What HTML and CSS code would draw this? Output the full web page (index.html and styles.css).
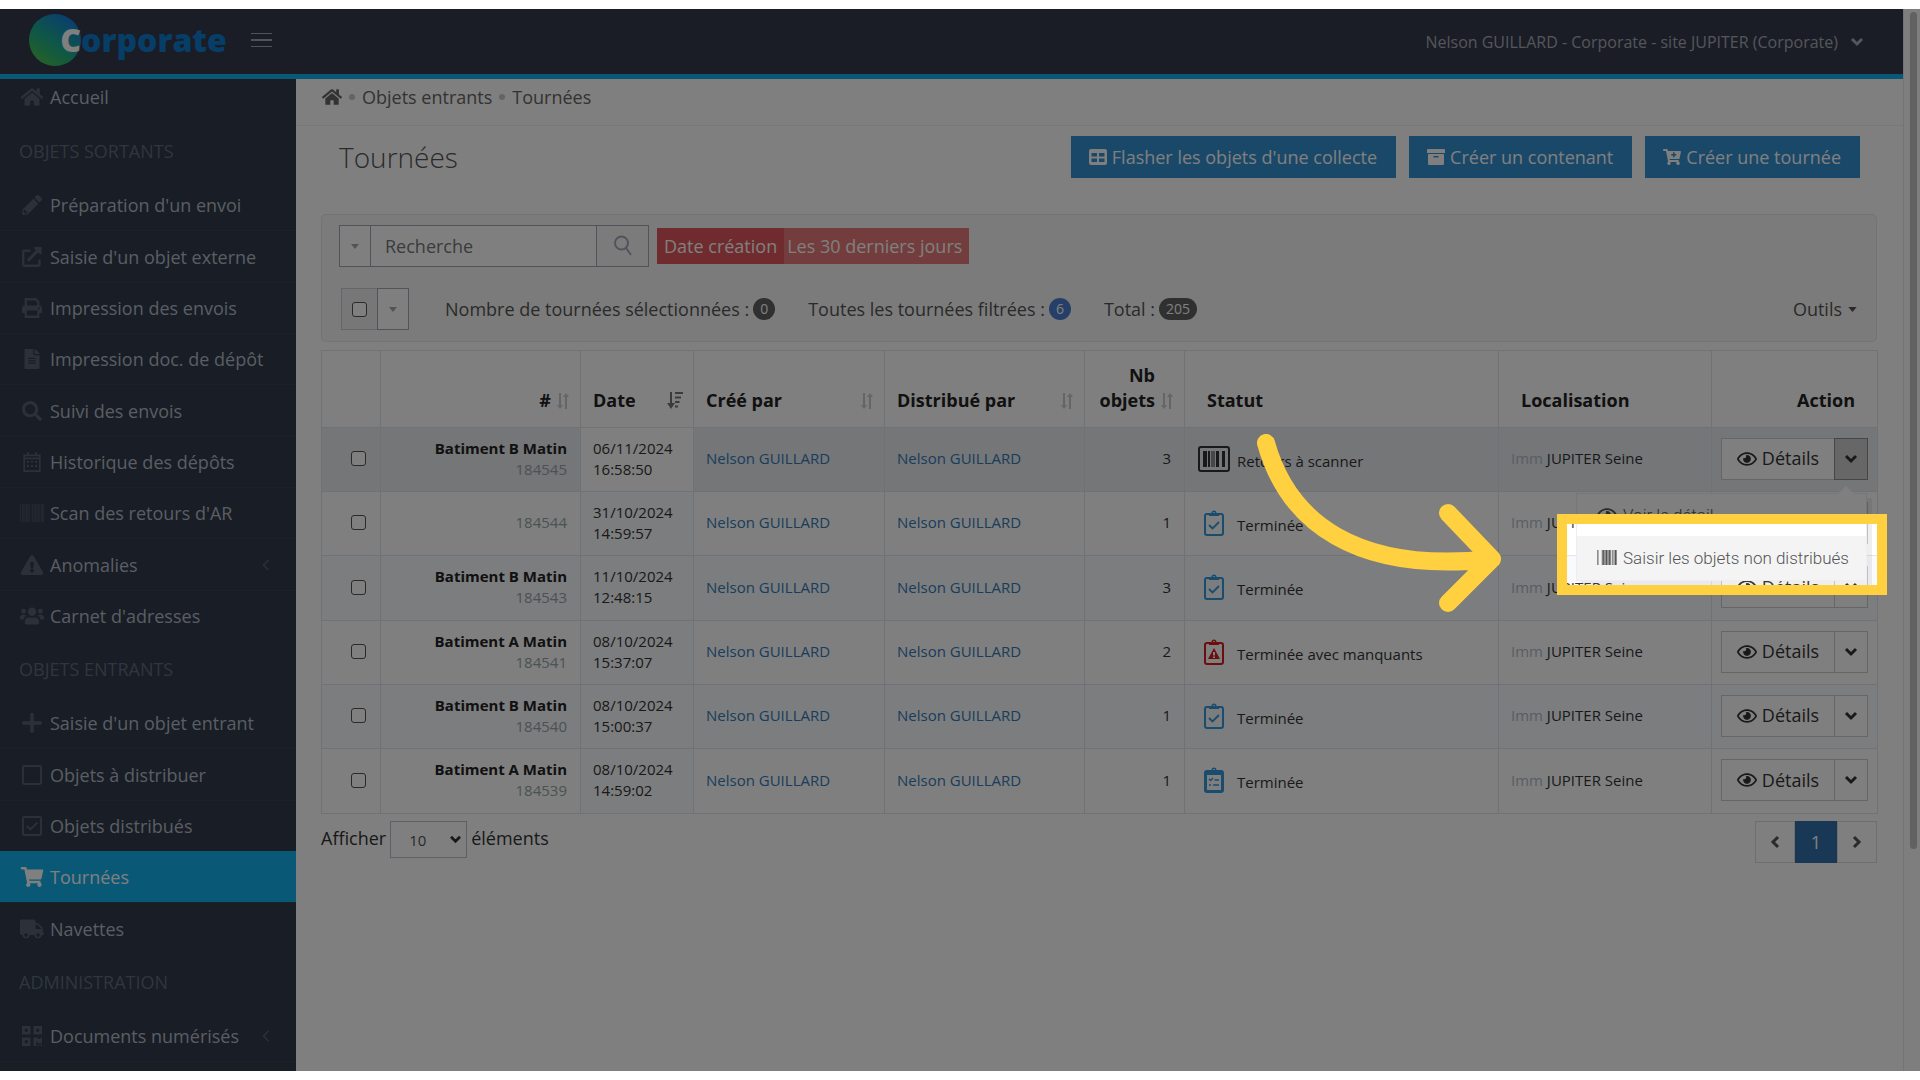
FILE: index.html
```html
<!DOCTYPE html>
<html lang="fr">
<head>
<meta charset="utf-8">
<title>Tournées</title>
<meta name="viewport" content="width=device-width, initial-scale=1">
<link rel="stylesheet" href="styles.css">
</head>
<body>
<svg class="sprite" aria-hidden="true">
  <symbol id="home" viewBox="0 0 576 512"><path d="M280.37 148.26L96 300.11V464a16 16 0 0 0 16 16l112.06-.29a16 16 0 0 0 15.92-16V368a16 16 0 0 1 16-16h64a16 16 0 0 1 16 16v95.64a16 16 0 0 0 16 16.05L464 480a16 16 0 0 0 16-16V300L295.67 148.26a12.19 12.19 0 0 0-15.3 0zM571.6 251.47L488 182.56V44.05a12 12 0 0 0-12-12h-56a12 12 0 0 0-12 12v72.61L318.47 43a48 48 0 0 0-61 0L4.34 251.47a12 12 0 0 0-1.6 16.9l25.5 31A12 12 0 0 0 45.15 301l235.22-193.74a12.19 12.19 0 0 1 15.3 0L530.9 301a12 12 0 0 0 16.9-1.6l25.5-31a12 12 0 0 0-1.7-16.93z"/></symbol>
  <symbol id="pencil" viewBox="0 0 512 512"><path d="M497.9 142.1l-46.1 46.1c-4.7 4.7-12.3 4.7-17 0l-111-111c-4.7-4.7-4.7-12.3 0-17l46.1-46.1c18.7-18.7 49.1-18.7 67.9 0l60.1 60.1c18.8 18.7 18.8 49.1 0 67.9zM284.2 99.8L21.6 362.4.4 483.9c-2.9 16.4 11.4 30.6 27.8 27.8l121.5-21.3 262.6-262.6c4.7-4.7 4.7-12.3 0-17l-111-111c-4.8-4.7-12.4-4.7-17.1 0zM88 424h48v36.3l-64.5 11.3-31.1-31.1L51.7 376H88v48z"/></symbol>
  <symbol id="external" viewBox="0 0 512 512"><path d="M448 320v136a24 24 0 0 1-24 24H56a24 24 0 0 1-24-24V120a24 24 0 0 1 24-24h160" fill="none" stroke="currentColor" stroke-width="60"/><path d="M488 0H330c-22 0-32 26-17 41l45 45-222 222c-9 9-9 24 0 34l22 22c10 9 25 9 34 0l222-222 45 45c15 15 41 5 41-17V24c0-13-1-24-12-24z"/></symbol>
  <symbol id="printer" viewBox="0 0 512 512"><path d="M96 230V32h256l64 64v134M96 330v150h320V330" fill="none" stroke="currentColor" stroke-width="60"/><path d="M64 192h384c35 0 64 29 64 64v112c0 9-7 16-16 16h-80v-64H96v64H16c-9 0-16-7-16-16V256c0-35 29-64 64-64zm368 50a24 24 0 1 0 0 48 24 24 0 0 0 0-48z" fill-rule="evenodd"/></symbol>
  <symbol id="file" viewBox="0 0 384 512"><path d="M224 136V0H24C10.7 0 0 10.7 0 24v464c0 13.3 10.7 24 24 24h336c13.3 0 24-10.7 24-24V160H248c-13.2 0-24-10.8-24-24zm64 236c0 6.6-5.4 12-12 12H108c-6.6 0-12-5.4-12-12v-8c0-6.6 5.4-12 12-12h168c6.6 0 12 5.4 12 12v8zm0-64c0 6.6-5.4 12-12 12H108c-6.6 0-12-5.4-12-12v-8c0-6.6 5.4-12 12-12h168c6.6 0 12 5.4 12 12v8zm0-72v8c0 6.6-5.4 12-12 12H108c-6.6 0-12-5.4-12-12v-8c0-6.6 5.4-12 12-12h168c6.6 0 12 5.4 12 12zm96-114.1v6.1H256V0h6.1c6.4 0 12.5 2.5 17 7l97.9 98c4.5 4.5 7 10.6 7 16.9z"/></symbol>
  <symbol id="search" viewBox="0 0 512 512"><path d="M505 442.7L405.3 343c-4.5-4.5-10.6-7-17-7H372c27.6-35.3 44-79.7 44-128C416 93.1 322.9 0 208 0S0 93.1 0 208s93.1 208 208 208c48.3 0 92.7-16.4 128-44v16.3c0 6.4 2.5 12.5 7 17l99.7 99.7c9.4 9.4 24.6 9.4 33.9 0l28.3-28.3c9.4-9.4 9.4-24.6.1-34zM208 336c-70.7 0-128-57.2-128-128 0-70.7 57.2-128 128-128 70.7 0 128 57.2 128 128 0 70.7-57.2 128-128 128z"/></symbol>
  <symbol id="search-thin" viewBox="0 0 18 22"><circle cx="7.500" cy="8" r="6.500" fill="none" stroke="currentColor" stroke-width="2"/><path d="M12 13l5 7" fill="none" stroke="currentColor" stroke-width="2"/></symbol>
  <symbol id="calendar" viewBox="0 0 448 512"><path d="M24 88h400v400H24zM24 165h400M120 0v88M328 0v88" fill="none" stroke="currentColor" stroke-width="44"/><path d="M96 226h50v50H96zm103 0h50v50h-50zm103 0h50v50h-50zM96 332h50v50H96zm103 0h50v50h-50zm103 0h50v50h-50z"/></symbol>
  <symbol id="barcode" viewBox="0 0 512 384"><path d="M0 0h26v384H0zM44 0h60v384H44zM116 0h60v384h-60zM184 0h34v384h-34zM248 0h44v384h-44zM304 0h60v384h-60zM374 0h52v384h-52zM440 0h72v384h-72z"/></symbol>
  <symbol id="barcode-fine" viewBox="0 0 18 14"><path d="M0 0h1v14H0z"/><path d="M4 0h9v14H4z" opacity=".6"/><path d="M5 0h1v14H5zM8 0h1v14H8zM11 0h1v14h-1zM14 0h1v14h-1zM16 0h2v14h-2z"/></symbol>
  <symbol id="warning" viewBox="0 0 576 512"><path d="M569.517 440.013C587.975 472.007 564.806 512 527.94 512H48.054c-36.937 0-59.999-40.055-41.577-71.987L246.423 23.985c18.467-32.009 64.72-31.951 83.154 0l239.94 416.028zM288 354c-25.405 0-46 20.595-46 46s20.595 46 46 46 46-20.595 46-46-20.595-46-46-46zm-43.673-165.346l7.418 136c.347 6.364 5.609 11.346 11.982 11.346h48.546c6.373 0 11.635-4.982 11.982-11.346l7.418-136c.375-6.874-5.098-12.654-11.982-12.654h-63.383c-6.884 0-12.356 5.78-11.981 12.654z"/></symbol>
  <symbol id="users" viewBox="0 0 640 512"><circle cx="96" cy="128" r="64"/><circle cx="544" cy="128" r="64"/><circle cx="320" cy="144" r="112"/><path d="M0 320v-32c0-35 29-64 64-64h64c18 0 34 7 45 19-40 22-69 62-75 109H32c-18 0-32-14-32-32zM640 320v-32c0-35-29-64-64-64h-64c-18 0-34 7-45 19 40 22 69 62 75 109h66c18 0 32-14 32-32zM128 432v-29c0-64 51-115 115-115 25 8 50 16 77 16s52-8 77-16c64 0 115 51 115 115v29c0 27-21 48-48 48H176c-27 0-48-21-48-48z"/></symbol>
  <symbol id="plus" viewBox="0 0 448 448"><path d="M416 184H264V32c0-18-14-32-32-32h-16c-18 0-32 14-32 32v152H32c-18 0-32 14-32 32v16c0 18 14 32 32 32h152v152c0 18 14 32 32 32h16c18 0 32-14 32-32V264h152c18 0 32-14 32-32v-16c0-18-14-32-32-32z"/></symbol>
  <symbol id="square" viewBox="0 0 448 448"><rect x="22" y="22" width="404" height="404" rx="26" fill="none" stroke="currentColor" stroke-width="44"/></symbol>
  <symbol id="square-check" viewBox="0 0 448 448"><rect x="22" y="22" width="404" height="404" rx="26" fill="none" stroke="currentColor" stroke-width="44"/><path d="M108 222l80 80 154-154" fill="none" stroke="currentColor" stroke-width="44"/></symbol>
  <symbol id="cart" viewBox="0 0 576 512"><path d="M528.12 301.319l47.273-208C578.806 78.301 567.391 64 551.99 64H159.208l-9.166-44.81C147.758 8.021 137.93 0 126.529 0H24C10.745 0 0 10.745 0 24v16c0 13.255 10.745 24 24 24h69.883l70.248 343.435C147.325 417.1 136 435.222 136 456c0 30.928 25.072 56 56 56s56-25.072 56-56c0-15.674-6.447-29.835-16.824-40h209.647C430.447 426.165 424 440.326 424 456c0 30.928 25.072 56 56 56s56-25.072 56-56c0-22.172-12.888-41.332-31.579-50.405l5.517-24.276c3.413-15.018-8.002-29.319-23.403-29.319H218.117l-6.545-32h293.145c11.206 0 20.92-7.754 23.403-18.681z"/></symbol>
  <symbol id="cart-plus" viewBox="0 0 576 512"><path fill-rule="evenodd" d="M528 301l47-208c4-15-8-29-23-29H159l-9-45C148 8 138 0 127 0H24C11 0 0 11 0 24v16c0 13 11 24 24 24h70l70 343c-17 10-28 28-28 49a56 56 0 1 0 95-40h210a56 56 0 1 0 63-10l6-25c3-15-8-29-24-29H218l-6-32h293c11 0 20-8 23-19zM320 104h50v56h56v50h-56v56h-50v-56h-56v-50h56z"/></symbol>
  <symbol id="truck" viewBox="0 0 640 512"><path d="M624 352h-16V243.9c0-12.7-5.1-24.9-14.1-33.9L494 110.1c-9-9-21.2-14.1-33.9-14.1H416V48c0-26.5-21.5-48-48-48H48C21.5 0 0 21.5 0 48v320c0 26.5 21.5 48 48 48h16c0 53 43 96 96 96s96-43 96-96h128c0 53 43 96 96 96s96-43 96-96h48c8.800 0 16-7.200 16-16v-32c0-8.800-7.200-16-16-16zM160 464c-26.500 0-48-21.500-48-48s21.500-48 48-48 48 21.500 48 48-21.500 48-48 48zm320 0c-26.500 0-48-21.500-48-48s21.500-48 48-48 48 21.500 48 48-21.500 48-48 48zm80-208H416V144h44.100l99.900 99.900V256z"/></symbol>
  <symbol id="qrcode" viewBox="0 0 448 448"><path fill-rule="evenodd" d="M0 192h192V0H0v192zM64 64h64v64H64V64zM256 0v192h192V0H256zm128 128h-64V64h64v64zM0 448h192V256H0v192zm64-128h64v64H64v-64zM416 256h32v128h-96v-32h-32v96h-64V256h96v32h64v-32zm0 160h32v32h-32v-32zm-64 0h32v32h-32v-32z"/></symbol>
  <symbol id="chevron-left" viewBox="0 0 8 12"><path d="M6.500 1L1.500 6l5 5" fill="none" stroke="currentColor" stroke-width="1.500"/></symbol>
  <symbol id="chevron-down" viewBox="0 0 14 10"><path d="M2 2l5 5 5-5" fill="none" stroke="currentColor" stroke-width="3"/></symbol>
  <symbol id="angle-left" viewBox="0 0 10 14"><path d="M8 2L3 7l5 5" fill="none" stroke="currentColor" stroke-width="3"/></symbol>
  <symbol id="angle-right" viewBox="0 0 10 14"><path d="M2 2l5 5-5 5" fill="none" stroke="currentColor" stroke-width="3"/></symbol>
  <symbol id="caret" viewBox="0 0 10 6"><path d="M0 0h10L5 6z"/></symbol>
  <symbol id="eye" viewBox="0 64 576 384"><path d="M288 144a110.940 110.940 0 0 0-31.240 5 55.400 55.400 0 0 1 7.240 27 56 56 0 0 1-56 56 55.400 55.400 0 0 1-27-7.240A111.710 111.710 0 1 0 288 144zm284.520 97.400C518.290 135.590 410.930 64 288 64S57.680 135.640 3.480 241.410a32.350 32.350 0 0 0 0 29.190C57.710 376.410 165.070 448 288 448s230.320-71.640 284.520-177.410a32.350 32.350 0 0 0 0-29.190zM288 400c-98.650 0-189.090-55-237.930-144C98.910 167 189.340 112 288 112s189.090 55 237.930 144C477.100 345 386.660 400 288 400z"/></symbol>
  <symbol id="grid" viewBox="0 0 18 16"><path fill-rule="evenodd" d="M2 0h14a2 2 0 0 1 2 2v12a2 2 0 0 1-2 2H2a2 2 0 0 1-2-2V2a2 2 0 0 1 2-2zm.500 4v3.500h5.500V4zm7.500 0v3.500h5.500V4zm-7.500 5.500V13h5.500V9.500zm7.500 0V13h5.500V9.500z"/></symbol>
  <symbol id="archive" viewBox="0 0 18 16"><path fill-rule="evenodd" d="M1 0h16a1 1 0 0 1 1 1v3H0V1a1 1 0 0 1 1-1zm0 5h16v10a1 1 0 0 1-1 1H2a1 1 0 0 1-1-1zm5.500 2v1.500h5V7z"/></symbol>
  <symbol id="sort" viewBox="0 0 14 16"><path d="M4 0v12M10 4v12" fill="none" stroke="currentColor" stroke-width="2"/><path d="M1 12h6l-3 4zM7 4h6l-3-4z"/></symbol>
  <symbol id="sort-desc" viewBox="0 0 16 17"><path d="M4 0v12M8 1h8M8 5.500h6M8 10h4.500M8 14.500h3" fill="none" stroke="currentColor" stroke-width="2"/><path d="M0 11h8l-4 6z"/></symbol>
  <symbol id="scan" viewBox="0 0 32 26"><rect x="1" y="1" width="30" height="24" rx="2" fill="none" stroke="currentColor" stroke-width="2"/><path d="M5 5h4v16H5zM10 5h2v16h-2zM13.500 5h1v16h-1zM18 5h3v16h-3zM24 5h3v16h-3zM15.500 5h1v16h-1z"/></symbol>
  <symbol id="clip" viewBox="0 0 20 26"><rect x="1" y="4" width="18" height="21" rx="2" fill="none" stroke="currentColor" stroke-width="2"/><path fill-rule="evenodd" d="M5 3h2.500a2.500 2.500 0 0 1 5 0H15v3H5zm5-1a1 1 0 1 0 0 2 1 1 0 0 0 0-2z"/></symbol>
  <symbol id="clip-check" viewBox="0 0 20 26"><use href="#clip"/><path d="M5 15l3.500 3.500L15 12" fill="none" stroke="currentColor" stroke-width="1.800"/></symbol>
  <symbol id="clip-warning" viewBox="0 0 20 26"><use href="#clip"/><path fill-rule="evenodd" d="M10 9l6 11H4zm-1 4v3.500h2V13zm0 4.500V19h2v-1.500z"/></symbol>
  <symbol id="clip-list" viewBox="0 0 20 26"><use href="#clip"/><path d="M2 4h16v4H2zM2 4h1v20H2zM17 4h1v20h-1zM2 23h16v1H2z"/><path d="M5 12l1.500 1.500L9 11M10.500 13H15M5 18h2M9 18h6" fill="none" stroke="currentColor" stroke-width="1.500"/></symbol>
</svg>

<div class="screen">
  <div class="page">
    <header class="topbar">
      <a class="logo" href="#"><span class="logo-initial">C</span>orporate</a>
      <button class="burger" type="button" aria-label="Menu"><span></span><span></span><span></span></button>
      <button class="account" type="button">Nelson GUILLARD - Corporate - site JUPITER (Corporate)<svg class="account-chevron"><use href="#chevron-down"/></svg></button>
    </header>

    <div class="body">
      <nav class="sidebar">
        <a class="nav-link nav-home" href="#"><svg><use href="#home"/></svg>Accueil</a>
        <h2>OBJETS SORTANTS</h2>
        <ul>
          <li><a class="nav-link" href="#"><svg><use href="#pencil"/></svg>Préparation d'un envoi</a></li>
          <li><a class="nav-link" href="#"><svg><use href="#external"/></svg>Saisie d'un objet externe</a></li>
          <li><a class="nav-link" href="#"><svg><use href="#printer"/></svg>Impression des envois</a></li>
          <li><a class="nav-link" href="#"><svg><use href="#file"/></svg>Impression doc. de dépôt</a></li>
          <li><a class="nav-link" href="#"><svg><use href="#search"/></svg>Suivi des envois</a></li>
          <li><a class="nav-link" href="#"><svg><use href="#calendar"/></svg>Historique des dépôts</a></li>
          <li><a class="nav-link nav-faint" href="#"><svg><use href="#barcode"/></svg>Scan des retours d'AR</a></li>
          <li><a class="nav-link" href="#"><svg><use href="#warning"/></svg>Anomalies<svg class="nav-more"><use href="#chevron-left"/></svg></a></li>
          <li><a class="nav-link" href="#"><svg><use href="#users"/></svg>Carnet d'adresses</a></li>
        </ul>
        <h2>OBJETS ENTRANTS</h2>
        <ul>
          <li><a class="nav-link" href="#"><svg><use href="#plus"/></svg>Saisie d'un objet entrant</a></li>
          <li><a class="nav-link" href="#"><svg><use href="#square"/></svg>Objets à distribuer</a></li>
          <li><a class="nav-link" href="#"><svg><use href="#square-check"/></svg>Objets distribués</a></li>
          <li class="active"><a class="nav-link" href="#" aria-current="page"><svg><use href="#cart"/></svg>Tournées</a></li>
          <li><a class="nav-link" href="#"><svg><use href="#truck"/></svg>Navettes</a></li>
        </ul>
        <h2>ADMINISTRATION</h2>
        <ul>
          <li><a class="nav-link" href="#"><svg><use href="#qrcode"/></svg>Documents numérisés<svg class="nav-more"><use href="#chevron-left"/></svg></a></li>
          <li></li>
        </ul>
      </nav>

      <main class="content">
        <div class="breadcrumb">
          <a href="#" aria-label="Accueil"><svg><use href="#home"/></svg></a><i></i><a href="#">Objets entrants</a><i></i><a href="#">Tournées</a>
        </div>

        <div class="title-row">
          <h1>Tournées</h1>
          <div class="title-actions">
            <button class="primary" type="button"><svg><use href="#grid"/></svg>Flasher les objets d'une collecte</button>
            <button class="primary" type="button"><svg><use href="#archive"/></svg>Créer un contenant</button>
            <button class="primary" type="button"><svg><use href="#cart-plus"/></svg>Créer une tournée</button>
          </div>
        </div>

        <section class="filters">
          <div class="filter-row">
            <div class="search">
              <button class="drop" type="button" aria-label="Options de recherche"><svg><use href="#caret"/></svg></button>
              <input type="text" placeholder="Recherche" aria-label="Recherche">
              <button class="search-go" type="button" aria-label="Rechercher"><svg><use href="#search-thin"/></svg></button>
            </div>
            <div class="tag"><span class="tag-name">Date création</span><span class="tag-value">Les 30 derniers jours</span></div>
          </div>
          <div class="filter-row counts">
            <div class="select-all">
              <label><input type="checkbox" aria-label="Tout sélectionner"></label>
              <button class="drop" type="button" aria-label="Options de sélection"><svg><use href="#caret"/></svg></button>
            </div>
            <span class="count">Nombre de tournées sélectionnées : <b>0</b></span>
            <span class="count">Toutes les tournées filtrées : <b class="blue">6</b></span>
            <span class="count">Total : <b>205</b></span>
            <button class="tools" type="button">Outils<svg><use href="#caret"/></svg></button>
          </div>
        </section>

        <table class="rounds">
          <colgroup><col class="c-check"><col class="c-num"><col class="c-date"><col class="c-by"><col class="c-dist"><col class="c-nb"><col class="c-status"><col class="c-loc"><col class="c-action"></colgroup>
          <thead>
            <tr>
              <th></th>
              <th><div class="head end">#<svg class="sort"><use href="#sort"/></svg></div></th>
              <th><div class="head spread">Date<svg class="sort sorted"><use href="#sort-desc"/></svg></div></th>
              <th><div class="head spread">Créé par<svg class="sort"><use href="#sort"/></svg></div></th>
              <th><div class="head spread">Distribué par<svg class="sort"><use href="#sort"/></svg></div></th>
              <th><div class="head end"><span>Nb<br>objets</span><svg class="sort"><use href="#sort"/></svg></div></th>
              <th><div class="head inset">Statut</div></th>
              <th><div class="head inset">Localisation</div></th>
              <th><div class="head inset end">Action</div></th>
            </tr>
          </thead>
          <tbody>
            <tr class="hovered">
              <td class="check"><input type="checkbox" aria-label="Sélectionner 184545"></td>
              <td class="num"><strong>Batiment B Matin</strong><span>184545</span></td>
              <td class="date">06/11/2024 16:58:50</td>
              <td><a href="#">Nelson GUILLARD</a></td>
              <td><a href="#">Nelson GUILLARD</a></td>
              <td class="nb">3</td>
              <td><div class="status dark"><svg class="wide"><use href="#scan"/></svg><span>Retours à scanner</span></div></td>
              <td class="loc"><small>Imm</small> JUPITER Seine</td>
              <td class="action">
                <div class="split">
                  <button class="details" type="button"><svg><use href="#eye"/></svg>Détails</button><button class="toggle open" type="button" aria-label="Plus d'actions"><svg><use href="#chevron-down"/></svg></button>
                  <div class="menu">
                    <a href="#"><svg class="menu-eye"><use href="#eye"/></svg>Voir le détail</a>
                    <a class="hover" href="#"><svg><use href="#barcode-fine"/></svg>Saisir les objets non distribués</a>
                    <div class="spotlight"></div>
                    <svg class="arrow" viewBox="0 0 244 178" aria-hidden="true"><path d="M9 9C31 88 99 140 235 125M191 79l44 46-44 44"/></svg>
                  </div>
                </div>
              </td>
            </tr>
            <tr>
              <td class="check"><input type="checkbox" aria-label="Sélectionner 184544"></td>
              <td class="num"><span>184544</span></td>
              <td class="date">31/10/2024 14:59:57</td>
              <td><a href="#">Nelson GUILLARD</a></td>
              <td><a href="#">Nelson GUILLARD</a></td>
              <td class="nb">1</td>
              <td><div class="status"><svg><use href="#clip-check"/></svg><span>Terminée</span></div></td>
              <td class="loc"><small>Imm</small> JUPITER Seine</td>
              <td class="action"><div class="split"><button class="details" type="button"><svg><use href="#eye"/></svg>Détails</button><button class="toggle" type="button" aria-label="Plus d'actions"><svg><use href="#chevron-down"/></svg></button></div></td>
            </tr>
            <tr>
              <td class="check"><input type="checkbox" aria-label="Sélectionner 184543"></td>
              <td class="num"><strong>Batiment B Matin</strong><span>184543</span></td>
              <td class="date">11/10/2024 12:48:15</td>
              <td><a href="#">Nelson GUILLARD</a></td>
              <td><a href="#">Nelson GUILLARD</a></td>
              <td class="nb">3</td>
              <td><div class="status"><svg><use href="#clip-check"/></svg><span>Terminée</span></div></td>
              <td class="loc"><small>Imm</small> JUPITER Seine</td>
              <td class="action"><div class="split"><button class="details" type="button"><svg><use href="#eye"/></svg>Détails</button><button class="toggle" type="button" aria-label="Plus d'actions"><svg><use href="#chevron-down"/></svg></button></div></td>
            </tr>
            <tr>
              <td class="check"><input type="checkbox" aria-label="Sélectionner 184541"></td>
              <td class="num"><strong>Batiment A Matin</strong><span>184541</span></td>
              <td class="date">08/10/2024 15:37:07</td>
              <td><a href="#">Nelson GUILLARD</a></td>
              <td><a href="#">Nelson GUILLARD</a></td>
              <td class="nb">2</td>
              <td><div class="status red"><svg><use href="#clip-warning"/></svg><span>Terminée avec manquants</span></div></td>
              <td class="loc"><small>Imm</small> JUPITER Seine</td>
              <td class="action"><div class="split"><button class="details" type="button"><svg><use href="#eye"/></svg>Détails</button><button class="toggle" type="button" aria-label="Plus d'actions"><svg><use href="#chevron-down"/></svg></button></div></td>
            </tr>
            <tr>
              <td class="check"><input type="checkbox" aria-label="Sélectionner 184540"></td>
              <td class="num"><strong>Batiment B Matin</strong><span>184540</span></td>
              <td class="date">08/10/2024 15:00:37</td>
              <td><a href="#">Nelson GUILLARD</a></td>
              <td><a href="#">Nelson GUILLARD</a></td>
              <td class="nb">1</td>
              <td><div class="status"><svg><use href="#clip-check"/></svg><span>Terminée</span></div></td>
              <td class="loc"><small>Imm</small> JUPITER Seine</td>
              <td class="action"><div class="split"><button class="details" type="button"><svg><use href="#eye"/></svg>Détails</button><button class="toggle" type="button" aria-label="Plus d'actions"><svg><use href="#chevron-down"/></svg></button></div></td>
            </tr>
            <tr>
              <td class="check"><input type="checkbox" aria-label="Sélectionner 184539"></td>
              <td class="num"><strong>Batiment A Matin</strong><span>184539</span></td>
              <td class="date">08/10/2024 14:59:02</td>
              <td><a href="#">Nelson GUILLARD</a></td>
              <td><a href="#">Nelson GUILLARD</a></td>
              <td class="nb">1</td>
              <td><div class="status"><svg><use href="#clip-list"/></svg><span>Terminée</span></div></td>
              <td class="loc"><small>Imm</small> JUPITER Seine</td>
              <td class="action"><div class="split"><button class="details" type="button"><svg><use href="#eye"/></svg>Détails</button><button class="toggle" type="button" aria-label="Plus d'actions"><svg><use href="#chevron-down"/></svg></button></div></td>
            </tr>
          </tbody>
        </table>

        <div class="table-foot">
          <div class="length">
            <label for="length">Afficher</label>
            <span class="select"><select id="length"><option>10</option><option>25</option><option>50</option></select><svg><use href="#chevron-down"/></svg></span>
            <span class="unit">éléments</span>
          </div>
          <div class="pager">
            <button type="button" aria-label="Précédent"><svg><use href="#angle-left"/></svg></button>
            <button class="current" type="button">1</button>
            <button type="button" aria-label="Suivant"><svg><use href="#angle-right"/></svg></button>
          </div>
        </div>
      </main>
    </div>
  </div>
  <div class="scrollbar"><div class="thumb"></div></div>
</div>
</body>
</html>
```
FILE: styles.css
```css
* { box-sizing: border-box; }

body {
  margin: 0;
  padding: 9px 0;
  background: #fff;
  color: #333;
  font: 18px/24px "Open Sans", "Noto Sans", sans-serif;
}

button, input, select { font: inherit; color: inherit; margin: 0; border-radius: 0; }
button { background: none; border: 0; padding: 0; }
a { color: inherit; text-decoration: none; }
svg { fill: currentColor; flex: none; }
.sprite { position: absolute; width: 0; height: 0; }

.screen {
  display: flex;
  height: calc(100vh - 18px);
  overflow: hidden;
  position: relative;
}
.page { flex: 1; min-width: 0; display: flex; flex-direction: column; }

/* Top bar */
.topbar {
  flex: none;
  height: 70px;
  display: flex;
  align-items: center;
  padding: 0 39px 0 29px;
  background: #343b4a;
  border-bottom: 5px solid #12b0ec;
}
.logo {
  display: flex;
  align-items: center;
  padding-bottom: 4px;
  color: #0e7cd0;
  font-size: 32px;
  font-weight: 800;
  line-height: 51px;
}
.logo-initial {
  width: 52px;
  height: 52px;
  border-radius: 50%;
  text-align: right;
  color: #fff;
  background: linear-gradient(215deg, #1480d8 15%, #1fae8c 55%, #4cc44c 90%);
}
.burger { display: flex; flex-direction: column; gap: 5px; margin-left: 24px; padding-bottom: 3px; }
.burger span { width: 21px; height: 1px; background: #a0a6b0; }
.burger span:nth-child(2) { height: 2px; }
.account {
  display: flex;
  align-items: center;
  gap: 12px;
  margin-left: auto;
  color: #a8adb8;
  font-size: 16px;
}
.account-chevron { width: 14px; height: 10px; }

/* Sidebar */
.body { flex: 1; min-height: 0; display: flex; }
.sidebar { flex: none; width: 296px; background: #323a4a; overflow: hidden; }
.sidebar ul { list-style: none; margin: 0; padding: 0; }
.sidebar li { height: 51px; border-top: 1px solid #384150; }
.sidebar li:nth-child(3n + 2) { height: 52px; }
.sidebar li:first-child { border-color: transparent; }
.sidebar h2 {
  margin: 0;
  padding: 16px 19px;
  height: 56px;
  font-size: 18px;
  font-weight: 400;
  color: #606d80;
}
.nav-link {
  display: flex;
  align-items: center;
  height: 100%;
  gap: 6px;
  padding-left: 20px;
  color: #b4bcc8;
}
.nav-link svg { width: 24px; height: 20px; color: #58616f; }
.nav-faint svg { color: #444d5a; }
.nav-home { height: 44px; padding-bottom: 8px; }
.nav-link .nav-more { width: 8px; height: 12px; margin: 0 26px 0 auto; }
.sidebar .active { background: #12b0ec; border-color: #12b0ec; }
.active .nav-link, .active .nav-link svg { color: #fff; }

/* Content */
.content { flex: 1; min-width: 0; background: #fff; }
.breadcrumb {
  display: flex;
  align-items: center;
  gap: 7px;
  height: 47px;
  padding: 0 26px 10px;
  border-bottom: 1px solid #eef1f5;
  color: #666;
}
.breadcrumb svg { display: block; width: 20px; height: 18px; }
.breadcrumb i { width: 6px; height: 6px; border-radius: 50%; background: #c8c8c8; }
.title-row {
  display: flex;
  justify-content: space-between;
  align-items: center;
  height: 62px;
  padding: 0 43px;
}
h1 { margin: 0; font-size: 28px; font-weight: 300; line-height: 40px; color: #555; }
.title-actions { display: flex; gap: 13px; }
.primary {
  display: flex;
  align-items: center;
  gap: 5px;
  height: 42px;
  padding: 0 19px 0 18px;
  background: #3490d2;
  color: #fff;
}
.primary svg { width: 18px; height: 16px; }

.filters {
  margin: 26px 26px 8px 25px;
  padding: 10px 17px 11px;
  background: #f7f7f7;
  border: 1px solid #e6e6e6;
  border-radius: 5px;
  color: #555;
}
.filter-row { display: flex; align-items: center; gap: 8px; height: 42px; }
.search, .select-all { display: flex; height: 42px; }
.search { width: 310px; }
.drop {
  display: grid;
  place-items: center;
  width: 32px;
  border: 1px solid #a0a9b4;
  background: #fff;
  color: #a0a9b4;
}
.drop svg { width: 8px; height: 5px; }
.search input {
  flex: 1;
  min-width: 0;
  padding: 0 14px;
  background: #fff;
  border: solid #a0a9b4;
  border-width: 1px 0;
}
.search input::placeholder { color: #777; opacity: 1; }
.search-go { display: grid; place-items: center; width: 53px; border: 1px solid #a0a9b4; color: #a0a9b4; }
.search-go svg { width: 18px; height: 22px; }
.tag { display: flex; line-height: 36px; color: #fff; }
.tag-name { padding: 0 7px; background: #e0565c; }
.tag-value { padding: 0 7px 0 3px; background: #e67a7a; }

.counts { margin-top: 21px; gap: 33px; padding: 0 2px; }
.select-all { margin-right: 3px; }
.select-all label {
  display: grid;
  place-items: center;
  width: 36px;
  background: #eee;
  border: 1px solid #c2cad8;
  border-right: 0;
}
input[type="checkbox"] {
  appearance: none;
  width: 15px;
  height: 15px;
  border: 1px solid #555;
  border-radius: 3px;
  background: #fff;
  display: block;
}
.count { display: flex; align-items: center; gap: 4px; }
.count b {
  min-width: 22px;
  padding: 0 7px;
  border-radius: 11px;
  background: #606060;
  color: #fff;
  font-size: 14px;
  font-weight: 400;
  line-height: 22px;
  text-align: center;
}
.count .blue { background: #4a7fd0; }
.tools { display: flex; align-items: center; gap: 6px; margin-left: auto; }
.tools svg { width: 9px; height: 5px; }

/* Table */
.rounds {
  width: calc(100% - 50px);
  margin-left: 25px;
  border-collapse: collapse;
  table-layout: fixed;
  font-size: 15px;
  line-height: 21px;
}
.c-check { width: 59px; }
.c-num { width: 200px; }
.c-date { width: 113px; }
.c-by { width: 191px; }
.c-dist { width: 200px; }
.c-nb { width: 100px; }
.c-loc { width: 213px; }
.c-action { width: 166px; }
.rounds th, .rounds td { border: 1px solid #e0e5ec; padding: 0 13px 2px 12px; text-align: left; }
.rounds th { height: 77px; padding: 0 10px 14px 12px; vertical-align: bottom; font-size: 18px; line-height: 25px; color: #222; }
.head { display: flex; align-items: flex-end; gap: 5px; }
.end { justify-content: flex-end; text-align: right; }
.spread { justify-content: space-between; }
.inset { padding: 0 12px 0 10px; }
.sort { width: 14px; height: 16px; margin-bottom: 4px; color: #cacaca; }
.sorted { width: 16px; height: 17px; color: #777; }
.rounds tbody tr { height: 64px; }
.rounds tbody tr:nth-child(3n) { height: 65px; }
.rounds tbody tr:nth-child(odd) { background: #f8fafd; }
.rounds tbody tr:nth-child(even) .date { background: #f8fafd; }
.rounds tbody tr.hovered { background: #e9ecf0; }
.hovered .date { background: #fff; }
.check input { margin-left: 17px; }
.rounds .num { text-align: right; }
.num strong, .num span { display: block; }
.num strong { color: #222; }
.num span { color: #95a5a6; }
.rounds td { color: #333; }
.rounds td a { color: #337ab7; }
.rounds .nb { text-align: right; }
.status { display: flex; align-items: center; gap: 13px; padding-left: 7px; color: #3598dc; }
.status svg { width: 20px; height: 26px; }
.status .wide { width: 32px; margin: 0 -6px; }
.status span { color: #333; padding-top: 5px; }
.status.dark { color: #333; }
.status.red { color: #d91e18; }
.loc small { font-size: 15px; color: #b0bcc8; }
.rounds .action { padding: 0 9px 2px; }
.split { position: relative; display: flex; height: 42px; font-size: 18px; }
.details {
  flex: 1;
  display: flex;
  align-items: center;
  justify-content: center;
  gap: 5px;
  border: 1px solid #ccc;
  background: #fff;
}
.details svg { width: 20px; height: 14px; }
.toggle {
  display: grid;
  place-items: center;
  width: 34px;
  margin-left: -1px;
  border: 1px solid #ccc;
  background: #fff;
}
.toggle.open { background: #cfcfcf; border-color: #8c8c8c; }
.toggle svg { width: 14px; height: 10px; }

/* Row menu, with the guide's spotlight over it */
.menu {
  position: absolute;
  z-index: 2;
  top: 55px;
  right: 1px;
  width: 291px;
  border: 1px solid #eee;
  background: #fff;
  box-shadow: 5px 5px rgba(102, 102, 102, .1);
  font: 300 17px/24px Roboto, "Liberation Sans", sans-serif;
}
.menu::before {
  content: "";
  position: absolute;
  top: -8px;
  right: 12px;
  border: solid transparent;
  border-width: 0 8px 8px;
  border-bottom-color: #fff;
}
.menu a { display: flex; align-items: center; gap: 6px; height: 42px; padding: 0 20px; white-space: nowrap; }
.menu .menu-eye { height: 14px; }
.rounds .menu a { color: #555; }
.menu .hover { height: 44px; background: #f4f4f4; }
.menu svg { width: 20px; height: 15px; }
.spotlight {
  position: absolute;
  top: 20px;
  left: -20px;
  width: 330px;
  height: 81px;
  border: 10px solid #ffd03f;
  box-shadow: 0 0 0 4000px rgba(0, 0, 0, .5);
}
.menu .arrow {
  position: absolute;
  top: -60px;
  left: -320px;
  width: 244px;
  height: 178px;
  fill: none;
  stroke: #ffd03f;
  stroke-width: 18;
  stroke-linecap: round;
  stroke-linejoin: round;
}

.table-foot { display: flex; justify-content: space-between; margin: 7px 26px 0 25px; }
.length { display: flex; align-items: center; gap: 4px; height: 37px; }
.length label, .unit { padding-bottom: 4px; }
.select { position: relative; }
.select select {
  appearance: none;
  display: block;
  width: 77px;
  height: 37px;
  padding: 0 18px;
  border: 1px solid #b8c0d0;
  background: #fff;
  color: #555;
  font-size: 15px;
}
.select svg { position: absolute; right: 5px; top: 14px; width: 13px; height: 9px; }
.pager { display: flex; color: #555; }
.pager button {
  display: grid;
  place-items: center;
  width: 40px;
  height: 42px;
  border: 1px solid #ddd;
}
.pager svg { width: 10px; height: 14px; }
.pager .current { width: 42px; background: #3071ad; border-color: #3071ad; color: #fff; }

.scrollbar {
  flex: none;
  width: 17px;
  padding: 3px 3px 0 6px;
  border-left: 1px solid #e8e8e8;
  background: #fcfcfc;
}
.thumb { height: 79%; border-radius: 5px; background: #c2c2c2; }
```
